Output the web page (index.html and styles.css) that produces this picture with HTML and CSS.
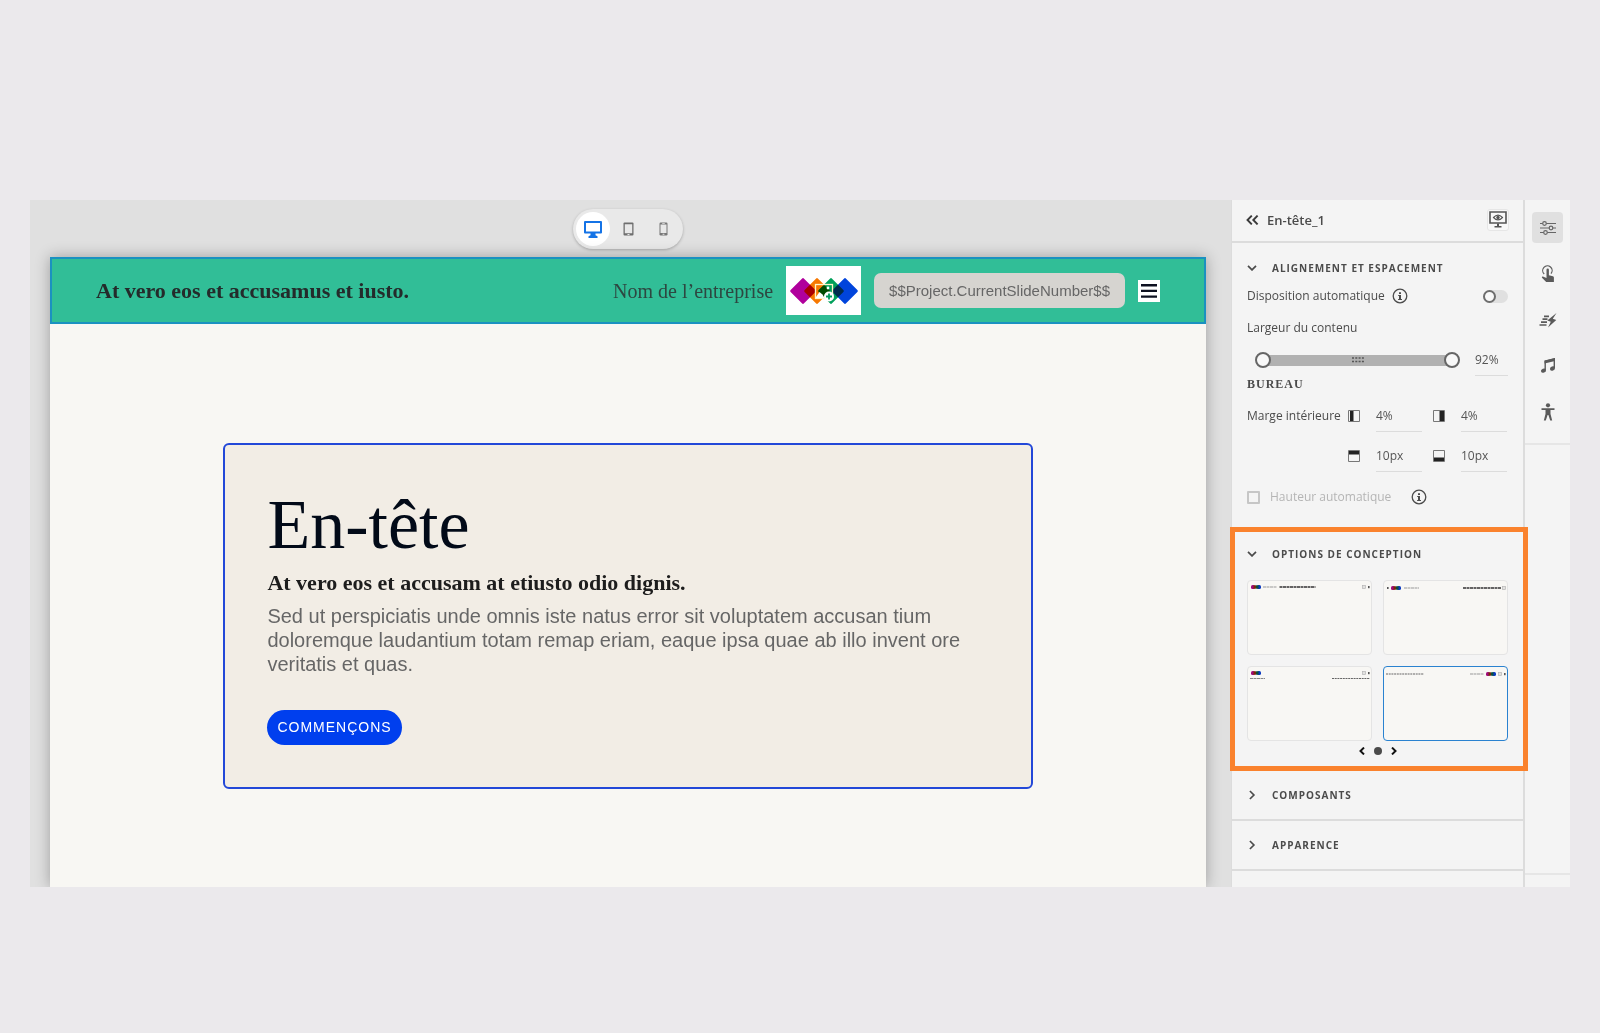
FILE: index.html
```html
<!DOCTYPE html>
<html lang="fr">
<head>
<meta charset="utf-8">
<meta name="viewport" content="width=device-width, initial-scale=1">
<title>En-tête_1</title>
<link rel="stylesheet" href="styles.css">
</head>
<body>
<svg class="defs" aria-hidden="true">
  <defs>
    <symbol id="info" viewBox="0 0 16 16"><circle cx="8" cy="8" r="6.8" fill="none" stroke="currentColor" stroke-width="1.3"/><path d="M7 4.2h2v1.8H7zM6.2 7H9v4h1v1H6.1v-1H7V8h-.8z" fill="currentColor"/></symbol>
    <symbol id="down" viewBox="0 0 10 6"><path d="M1 .9l4 4 4-4" fill="none" stroke="currentColor" stroke-width="1.7"/></symbol>
    <symbol id="right" viewBox="0 0 6 10"><path d="M.9 1l4 4-4 4" fill="none" stroke="currentColor" stroke-width="1.7"/></symbol>
    <symbol id="logo" viewBox="0 0 70 28">
      <g class="blend">
        <rect x="4.500" y="4.500" width="19" height="19" rx="1.500" transform="rotate(45 14 14)" fill="#b0009c"/>
        <rect x="18.500" y="4.500" width="19" height="19" rx="1.500" transform="rotate(45 28 14)" fill="#f77800"/>
        <rect x="32.500" y="4.500" width="19" height="19" rx="1.500" transform="rotate(45 42 14)" fill="#00a05a"/>
        <rect x="46.500" y="4.500" width="19" height="19" rx="1.500" transform="rotate(45 56 14)" fill="#0044dc"/>
      </g>
    </symbol>
    <symbol id="minilogo" viewBox="0 0 10 4"><rect width="4" height="4" rx="1.6" fill="#a00a78"/><rect x="6" width="4" height="4" rx="1.6" fill="#0838c0"/><rect x="2.500" y=".3" width="2.500" height="3.400" fill="#7a2808"/><rect x="5" y=".3" width="2.500" height="3.400" fill="#0b5038"/></symbol>
    <symbol id="minitools" viewBox="0 0 8 4"><rect x=".5" y=".5" width="3" height="3" fill="#e2e2e0" stroke="#b5b5b5" stroke-width=".7"/><rect x="6" y="1" width="1.600" height="2.200" fill="#555"/></symbol>
  </defs>
</svg>

<div class="app">
  <main class="workspace">
    <div class="devices" role="group" aria-label="Appareil">
      <button class="device active" aria-label="Bureau"><svg width="18" height="18" viewBox="0 0 18 18"><path fill="#1473e6" fill-rule="evenodd" d="M1 1h16a1 1 0 0 1 1 1v10.500a1 1 0 0 1-1 1h-5.500v1.800l2 1V18h-9v-1.700l2-1v-1.800H1a1 1 0 0 1-1-1V2a1 1 0 0 1 1-1zm1 2v8.500h14V3z"/></svg></button>
      <button class="device" aria-label="Tablette"><svg width="11" height="14" viewBox="0 0 11 14"><rect x=".5" y=".5" width="10" height="13" rx="1" fill="#6e6e6e"/><path fill="#e8e8e8" d="M1.800 2.200h7.400v9H1.800zM4.500 12h2v1h-2z"/></svg></button>
      <button class="device" aria-label="Mobile"><svg width="9" height="14" viewBox="0 0 9 14"><rect x=".5" y=".5" width="8" height="13" rx="1.200" fill="#777"/><path fill="#e8e8e8" d="M1.500 2.500h6v8.500h-6zM3.200 1h2.600v.7H3.200zM3.600 11.800h1.800v1H3.600z"/></svg></button>
    </div>

    <div class="slide">
      <header class="slide-header">
        <p class="lead">At vero eos et accusamus et iusto.</p>
        <p class="company">Nom de l’entreprise</p>
        <div class="logo">
          <svg width="70" height="28"><use href="#logo"/></svg>
          <svg class="logo-edit" width="22" height="20" viewBox="0 0 22 20" aria-hidden="true"><rect x="1.500" y="1.500" width="17" height="14" fill="none" stroke="#fff6c8" stroke-width="1.300"/><circle cx="14" cy="5" r="1.400" fill="#fff"/><path d="M2 14l3.500-5 3 2.500 2 3.500H2z" fill="#fff"/><circle cx="15" cy="13.500" r="5" fill="#fff"/><path d="M15 10.500v6M12 13.500h6" stroke="#009a5c" stroke-width="1.800"/></svg>
        </div>
        <p class="slide-number">$$Project.CurrentSlideNumber$$</p>
        <button class="menu" aria-label="Menu"><svg width="16" height="14" viewBox="0 0 16 14"><path d="M0 0h16v2.400H0zM0 5.700h16v2.400H0zM0 11.400h16v2.400H0z" fill="#0d1020"/></svg></button>
      </header>
      <section class="card">
        <h1>En-tête</h1>
        <h2>At vero eos et accusam at etiusto odio dignis.</h2>
        <p class="copy">Sed ut perspiciatis unde omnis iste natus error sit voluptatem accusan tium<br>doloremque laudantium totam remap eriam, eaque ipsa quae ab illo invent ore<br>veritatis et quas.</p>
        <button class="cta">COMMENÇONS</button>
      </section>
    </div>
  </main>

  <aside class="panel">
    <div class="panel-head">
      <button class="icon-button" aria-label="Retour"><svg width="13" height="10" viewBox="0 0 13 10"><path d="M5.800.6L1.500 5l4.300 4.400M11.600.6L7.300 5l4.300 4.400" fill="none" stroke="#3a3a3a" stroke-width="1.900"/></svg></button>
      <h2>En-tête_1</h2>
      <button class="preview" aria-label="Aperçu"><svg width="18" height="17" viewBox="0 0 18 17"><path d="M1 1h16v11H1z" fill="none" stroke="#555" stroke-width="1.600"/><path d="M8 12.500h2v2.500h2.500v1.500h-7V15H8z" fill="#555"/><path d="M4.500 6.500Q9 1.800 13.500 6.500Q9 11.200 4.500 6.500z" fill="none" stroke="#555" stroke-width="1.100"/><circle cx="9" cy="6.500" r="1.700" fill="#555"/></svg></button>
    </div>

    <section class="group layout-group">
      <button class="group-title"><svg width="10" height="6"><use href="#down"/></svg>ALIGNEMENT ET ESPACEMENT</button>
      <div class="row auto-row">
        <label for="auto">Disposition automatique</label>
        <svg class="info" width="16" height="16"><use href="#info"/></svg>
        <input class="switch" id="auto" type="checkbox">
      </div>
      <label class="row width-label" for="content-width">Largeur du contenu</label>
      <div class="row width-row">
        <div class="range">
          <input type="range" min="0" max="100" value="0" aria-label="Bord gauche du contenu">
          <input type="range" min="0" max="100" value="100" aria-label="Bord droit du contenu">
          <svg width="12" height="6" viewBox="0 0 12 6"><path d="M0 1h12M0 4.500h12" stroke="#555" stroke-width="1.500" stroke-dasharray="2 1.300"/></svg>
        </div>
        <input class="field" id="content-width" value="92%">
      </div>
      <h3>BUREAU</h3>
      <div class="margins">
        <span>Marge intérieure</span>
        <svg width="12" height="12" viewBox="0 0 12 12"><path d="M.5.500h11v11H.5z" fill="none" stroke="#777"/><path d="M2 1h3.500v10H2z" fill="#222"/></svg>
        <input class="field" value="4%" aria-label="Marge gauche">
        <svg width="12" height="12" viewBox="0 0 12 12"><path d="M.5.500h11v11H.5z" fill="none" stroke="#777"/><path d="M6.500 1H11v10H6.500z" fill="#222"/></svg>
        <input class="field" value="4%" aria-label="Marge droite">
        <span></span>
        <svg width="12" height="12" viewBox="0 0 12 12"><path d="M.5.500h11v11H.5z" fill="none" stroke="#777"/><path d="M1 1h10v3.500H1z" fill="#222"/></svg>
        <input class="field" value="10px" aria-label="Marge haute">
        <svg width="12" height="12" viewBox="0 0 12 12"><path d="M.5.500h11v11H.5z" fill="none" stroke="#777"/><path d="M1 7.500h10V11H1z" fill="#222"/></svg>
        <input class="field" value="10px" aria-label="Marge basse">
      </div>
      <div class="row height-row">
        <input class="tick" id="height" type="checkbox" disabled>
        <label for="height">Hauteur automatique</label>
        <svg class="info" width="16" height="16"><use href="#info"/></svg>
      </div>
    </section>

    <section class="group highlight">
      <button class="group-title"><svg width="10" height="6"><use href="#down"/></svg>OPTIONS DE CONCEPTION</button>
      <div class="designs">
        <button class="design" aria-label="Conception 1"><svg width="120" height="70" viewBox="0 2 120 70"><use href="#minilogo" x="1" y="4" width="10" height="4"/><path d="M13 6h14" stroke="#999" stroke-width="1" stroke-dasharray="3 .5"/><path d="M29.500 6h36" stroke="#333" stroke-width="1.400" stroke-dasharray="3 .5"/><use href="#minitools" x="112" y="4" width="8" height="4"/></svg></button>
        <button class="design" aria-label="Conception 2"><svg width="120" height="70" viewBox="0 2 120 70"><rect x="1" y="6" width="1.600" height="2" fill="#555"/><use href="#minilogo" x="5" y="5" width="10" height="4"/><path d="M18 7h15" stroke="#999" stroke-width="1" stroke-dasharray="3 .5"/><path d="M77 7h38" stroke="#333" stroke-width="1.400" stroke-dasharray="3 .5"/><rect x="116.500" y="5.500" width="3" height="3" fill="#e2e2e0" stroke="#b5b5b5" stroke-width=".7"/></svg></button>
        <button class="design" aria-label="Conception 3"><svg width="120" height="70" viewBox="0 2 120 70"><use href="#minilogo" x="1" y="4" width="10" height="4"/><path d="M0 11.500h15" stroke="#888" stroke-width="1" stroke-dasharray="3 .5"/><path d="M82 11.500h38" stroke="#666" stroke-width="1.200" stroke-dasharray="2 .7"/><use href="#minitools" x="112" y="4" width="8" height="4"/></svg></button>
        <button class="design selected" aria-label="Conception 4"><svg width="120" height="70" viewBox="0 2 120 70"><path d="M0 7h38" stroke="#666" stroke-width="1.200" stroke-dasharray="2 .7"/><path d="M84 7h14" stroke="#999" stroke-width="1" stroke-dasharray="3 .5"/><use href="#minilogo" x="100" y="5" width="10" height="4"/><use href="#minitools" x="112" y="5" width="8" height="4"/></svg></button>
      </div>
      <div class="pager">
        <button aria-label="Précédent"><svg width="6" height="8" viewBox="0 0 6 8"><path d="M5 .6L1.500 4 5 7.400" fill="none" stroke="#111" stroke-width="2"/></svg></button>
        <button class="dot" aria-label="Page 1"></button>
        <button aria-label="Suivant"><svg width="6" height="8" viewBox="0 0 6 8"><path d="M1 .6L4.500 4 1 7.400" fill="none" stroke="#111" stroke-width="2"/></svg></button>
      </div>
    </section>

    <button class="group-title closed"><svg width="10" height="10"><use href="#right"/></svg>COMPOSANTS</button>
    <button class="group-title closed"><svg width="10" height="10"><use href="#right"/></svg>APPARENCE</button>
  </aside>

  <nav class="rail" aria-label="Outils">
    <div class="tools">
      <button class="tool active" aria-label="Propriétés"><svg width="16" height="16" viewBox="0 0 16 16" fill="#e0e0e0" stroke="#666" stroke-width="1.200"><path d="M0 3.500h16M0 8h16M0 12.500h16"/><circle cx="4.500" cy="3.500" r="1.800"/><circle cx="11" cy="8" r="1.800"/><circle cx="5.500" cy="12.500" r="1.800"/></svg></button>
      <button class="tool" aria-label="Interactions"><svg width="14" height="18" viewBox="0 0 14 18"><path d="M3.200 9A4.700 4.700 0 1 1 10 8.600" fill="none" stroke="#5a5a5a" stroke-width="1.200"/><path fill="#5a5a5a" d="M5.500 4.800a1.200 1.200 0 0 1 2.400 0v5.500l4 .9a1.400 1.400 0 0 1 1 1.400V17H5.200L1 12.800c-.5-.9.500-1.700 1.400-1.100l3.100 1.300z"/></svg></button>
      <button class="tool" aria-label="Animations"><svg width="18" height="16" viewBox="0 0 18 16"><path d="M5 4.300h5M3.500 7.200h5M2 10.100h6M.500 13h7" stroke="#5a5a5a" stroke-width="1.700"/><path fill="#5a5a5a" d="M17.500 1L8.300 8.600l3.500 1.100L9 15.500 17.300 7.900l-3.500-1.200z"/></svg></button>
      <button class="tool" aria-label="Audio"><svg width="16" height="17" viewBox="0 0 16 17"><path d="M5.200 13.200V4.200L14.300 2v9" fill="none" stroke="#5a5a5a" stroke-width="1.400"/><path d="M4.500 3.600L15 1v3L4.500 6.600z" fill="#5a5a5a"/><ellipse cx="3.500" cy="13.700" rx="2.600" ry="2" transform="rotate(-20 3.500 13.700)" fill="#5a5a5a"/><ellipse cx="12.500" cy="11.500" rx="2.600" ry="2" transform="rotate(-20 12.500 11.500)" fill="#5a5a5a"/></svg></button>
      <button class="tool" aria-label="Accessibilité"><svg width="16" height="18" viewBox="0 0 16 18"><circle cx="8" cy="2.300" r="2.100" fill="#5a5a5a"/><path fill="#5a5a5a" d="M1.500 5.200h13v1.900h-4V11l1.700 6.600h-2L8.400 12h-.8l-1.800 5.600h-2L5.500 11V7.100h-4z"/></svg></button>
    </div>
    <div class="rail-end"></div>
  </nav>
</div>
</body>
</html>
```
FILE: styles.css
```css
*, *::before { box-sizing: border-box; }

body {
  margin: 0;
  padding: 200px 30px 146px;
  background: #ebe9ec;
  color: #4b4b4b;
  font: 12px/20px "Open Sans", "Noto Sans", sans-serif;
}

h1, h2, h3, p { margin: 0; }
button { padding: 0; border: 0; background: none; color: inherit; font: inherit; cursor: pointer; }
svg { display: block; flex: none; }
.defs { position: absolute; width: 0; height: 0; }
.blend rect { mix-blend-mode: multiply; }

.app { display: grid; grid-template-columns: minmax(0, 1fr) 294px 45px; overflow: hidden; }

/* Workspace */
.workspace {
  display: flex;
  flex-direction: column;
  align-items: center;
  gap: 8px;
  padding: 9px 25px 0 20px;
  overflow: hidden;
  background: #e0e0e0;
}
.devices {
  display: flex;
  gap: 1px;
  padding: 3px;
  border-radius: 20px;
  background: #e9e9e9;
  box-shadow: 0 1px 3px rgba(0, 0, 0, .25);
}
.device { display: grid; place-items: center; width: 34px; height: 34px; border-radius: 50%; }
.device.active { background: #fff; }

.slide {
  align-self: stretch;
  flex: 1;
  padding-bottom: 98px;
  background: #f8f7f3;
  box-shadow: 0 0 14px rgba(0, 0, 0, .3);
}
.slide-header {
  display: flex;
  align-items: center;
  gap: 13px;
  padding: 7px 44px;
  border: 2px solid #1b91c0;
  background: #31be97;
}
.lead { flex: 1; color: #242b2b; font: bold 22px/24px "Liberation Serif", serif; }
.company { color: #2d4741; font: 20px/24px "Liberation Serif", serif; }
.logo { display: grid; place-items: center; width: 75px; height: 49px; background: #fff; }
.logo > svg { grid-area: 1 / 1; isolation: isolate; }
.logo-edit { margin: 4px 0 0 2px; }
.slide-number {
  padding: 0 15px;
  border-radius: 7px;
  background: #d6d4d0;
  color: #666;
  font: 15px/35px "Liberation Sans", sans-serif;
}
.menu { display: grid; place-items: center; width: 22px; height: 22px; background: #fff; }

.card {
  width: 70%;
  margin: 119px auto 0;
  padding: 42px;
  border: 2px solid #2348d8;
  border-radius: 6px;
  background: #f2ede5;
}
.card h1 { color: #020a18; font: 70px/76px "Liberation Serif", serif; }
.card h2 { padding-top: 8px; color: #1d1d1d; font: bold 22px/24px "Liberation Serif", serif; }
.copy { padding-top: 9px; color: #666; font: 20px/24px "Liberation Sans", sans-serif; }
.cta {
  margin-top: 34px;
  padding: 0 10px;
  border-radius: 18px;
  background: #003fee;
  color: #fff;
  font: 14px/35px "Liberation Sans", sans-serif;
  letter-spacing: 1px;
}

/* Properties panel */
.panel { border: solid #dcdcdc; border-width: 0 2px 0 1px; background: #f4f4f4; }
.panel-head {
  display: flex;
  align-items: center;
  gap: 8px;
  height: 43px;
  padding: 0 14px 2px;
  border-bottom: 2px solid #dcdcdc;
}
.panel-head h2 { flex: 1; font: 600 13px/20px "Open Sans", sans-serif; }
.preview { display: grid; place-items: center; width: 22px; height: 22px; border: 1px solid #e6e6e6; border-radius: 3px; background: #f8f8f8; }
.group { padding: 0 15px; }
.group-title {
  display: flex;
  align-items: center;
  gap: 15px;
  width: 100%;
  font: bold 10px/20px "Open Sans", sans-serif;
  letter-spacing: 1px;
}
.layout-group { padding-top: 15px; padding-bottom: 20px; }
.row { display: flex; align-items: center; }
.info { margin-left: 7px; color: #4b4b4b; }
.auto-row { height: 36px; }
.switch { appearance: none; width: 25px; height: 13px; margin: 0 0 0 auto; border-radius: 7px; background: #e0e0e0; }
.switch::before { content: ""; display: block; width: 13px; height: 13px; border: 2px solid #6e6e6e; border-radius: 50%; background: #f8f8f8; }
.width-label { height: 28px; }
.width-row { justify-content: space-between; height: 36px; padding-left: 8px; }
.range { display: grid; align-items: center; justify-items: center; width: 205px; }
.range::before { content: ""; grid-area: 1 / 1; justify-self: stretch; height: 11px; margin: 0 8px; background: #b1b1b1; }
.range > * { grid-area: 1 / 1; }
.range input { appearance: none; width: 100%; height: 16px; margin: 0; background: none; pointer-events: none; }
.range input::-webkit-slider-thumb { appearance: none; box-sizing: border-box; width: 16px; height: 16px; border: 2px solid #666; border-radius: 50%; background: #f8f8f8; pointer-events: auto; }
.field {
  width: 100%;
  min-width: 0;
  height: 32px;
  padding: 0;
  border: 0;
  border-bottom: 1px solid #dcdcdc;
  background: none;
  color: #555;
  font: inherit;
}
.width-row .field { width: 33px; }
h3 { font: bold 12px/12px "Liberation Serif", serif; letter-spacing: 1px; }
.margins {
  display: grid;
  grid-template-columns: 90px 17px 46px 17px 46px;
  column-gap: 11px;
  row-gap: 8px;
  align-items: center;
  padding-top: 10px;
}
.margins span { white-space: nowrap; }
.height-row { margin-top: 15px; color: #b5b5b5; }
.tick { appearance: none; width: 13px; height: 13px; margin: 0 10px 0 0; border: 2px solid #c6c6c6; border-radius: 1px; }
.height-row .info { margin-left: 20px; }

.highlight { position: relative; margin: 0 -5px 0 -2px; padding: 12px 15px 5px 12px; border: 5px solid #fa822d; }
.designs { display: grid; grid-template-columns: 125px 125px; gap: 11px; padding-top: 16px; }
.design { display: grid; place-items: center; height: 75px; border: 1px solid #e4e4e4; border-radius: 4px; background: #f8f7f4; }
.selected { border-color: #2a82d0; }
.pager { display: flex; align-items: center; justify-content: center; gap: 9px; height: 20px; }
.dot { width: 8px; height: 8px; border-radius: 50%; background: #4b4b4b; }
.closed { height: 50px; padding: 0 15px; border-bottom: 2px solid #dcdcdc; }

/* Tool rail */
.rail { display: flex; flex-direction: column; justify-content: space-between; background: #f4f4f4; }
.tools { display: flex; flex-direction: column; align-items: center; gap: 15px; padding: 12px 0 16px; border-bottom: 2px solid #e6e6e6; }
.tool { display: grid; place-items: center; width: 31px; height: 31px; border-radius: 4px; }
.tool.active { background: #e0e0e0; }
.rail-end { height: 14px; border-top: 2px solid #e6e6e6; }
```
